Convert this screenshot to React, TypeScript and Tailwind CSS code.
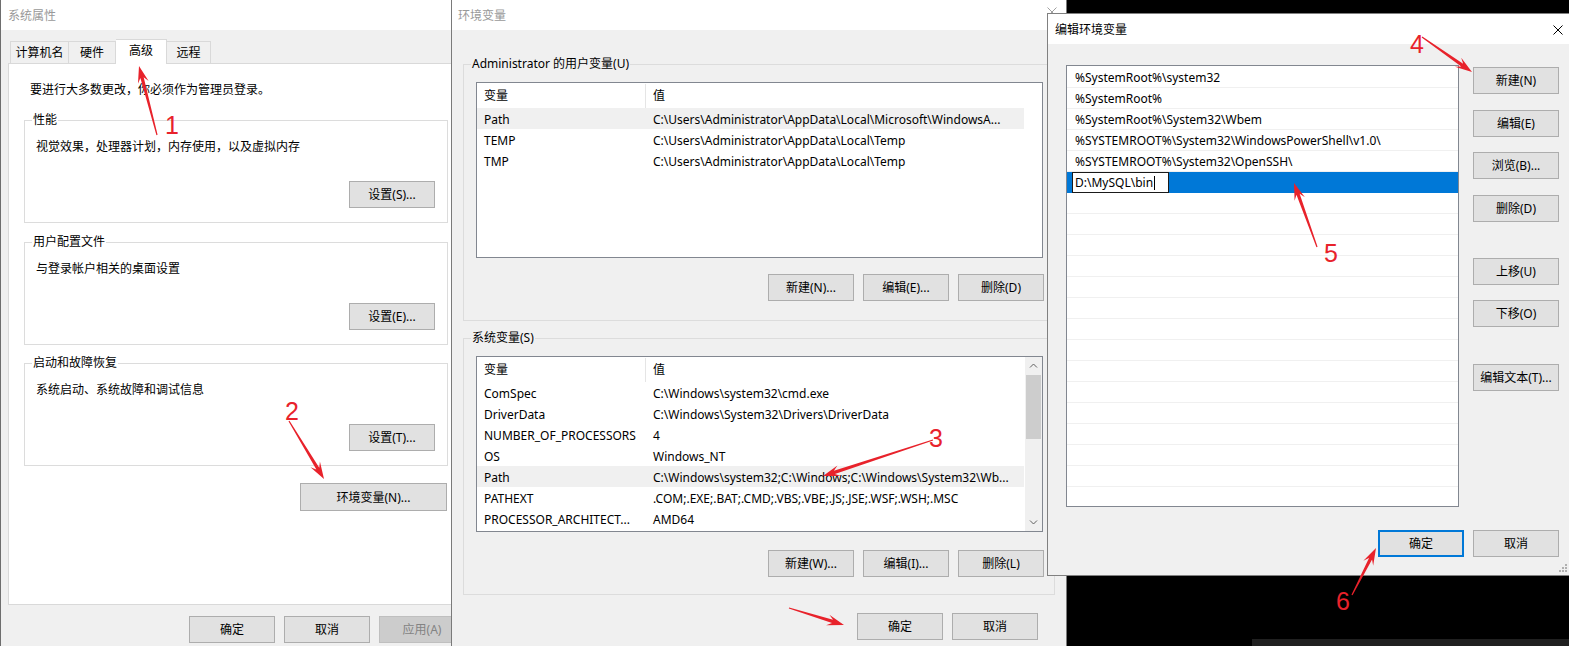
import React from "react";

const userVars = [
  ["Path", "C:\\Users\\Administrator\\AppData\\Local\\Microsoft\\WindowsA..."],
  ["TEMP", "C:\\Users\\Administrator\\AppData\\Local\\Temp"],
  ["TMP", "C:\\Users\\Administrator\\AppData\\Local\\Temp"],
];

const sysVars = [
  ["ComSpec", "C:\\Windows\\system32\\cmd.exe"],
  ["DriverData", "C:\\Windows\\System32\\Drivers\\DriverData"],
  ["NUMBER_OF_PROCESSORS", "4"],
  ["OS", "Windows_NT"],
  ["Path", "C:\\Windows\\system32;C:\\Windows;C:\\Windows\\System32\\Wb..."],
  ["PATHEXT", ".COM;.EXE;.BAT;.CMD;.VBS;.VBE;.JS;.JSE;.WSF;.WSH;.MSC"],
  ["PROCESSOR_ARCHITECT...", "AMD64"],
];

const pathItems = [
  "%SystemRoot%\\system32",
  "%SystemRoot%",
  "%SystemRoot%\\System32\\Wbem",
  "%SYSTEMROOT%\\System32\\WindowsPowerShell\\v1.0\\",
  "%SYSTEMROOT%\\System32\\OpenSSH\\",
];

// tail x, tail y, tip x, tip y
const arrows = [
  [157, 135, 139, 66],
  [289, 421, 324, 479],
  [933, 440, 823, 476],
  [1422, 37, 1472, 72],
  [1317, 247, 1294, 183],
  [1352, 595, 1376, 548],
  [789, 608, 844, 625],
];

const marks = [
  ["1", 165, 134],
  ["2", 285, 420],
  ["3", 929, 447],
  ["4", 1410, 53],
  ["5", 1324, 262],
  ["6", 1336, 610],
];

function arrowPoints([x1, y1, x2, y2]: number[]) {
  const len = Math.hypot(x2 - x1, y2 - y1);
  const ux = (x2 - x1) / len;
  const uy = (y2 - y1) / len;
  const nx = -uy;
  const ny = ux;
  const bx = x2 - ux * 12;
  const by = y2 - uy * 12;
  const wx = x2 - ux * 17;
  const wy = y2 - uy * 17;
  const pts = [
    [x1 + nx * 0.6, y1 + ny * 0.6],
    [bx + nx * 1.7, by + ny * 1.7],
    [wx + nx * 5.5, wy + ny * 5.5],
    [x2, y2],
    [wx - nx * 5.5, wy - ny * 5.5],
    [bx - nx * 1.7, by - ny * 1.7],
    [x1 - nx * 0.6, y1 - ny * 0.6],
  ];
  return pts.map((p) => p.join(",")).join(" ");
}

function Btn({
  children,
  className = "",
}: {
  children: React.ReactNode;
  className?: string;
}) {
  return (
    <div
      className={`flex h-[27px] w-[86px] shrink-0 items-center justify-center border border-[#adadad] bg-[#e1e1e1] pt-px text-black ${className}`}
    >
      {children}
    </div>
  );
}

function CloseX({ className = "" }: { className?: string }) {
  return (
    <svg width="10" height="10" viewBox="0 0 10 10" className={className}>
      <path d="M0.5 0.5L9.5 9.5M9.5 0.5L0.5 9.5" stroke="currentColor" strokeWidth="1" />
    </svg>
  );
}

function GroupBox({
  label,
  text,
  button,
  className = "",
}: {
  label: string;
  text: string;
  button: string;
  className?: string;
}) {
  return (
    <div className={`relative ml-[15px] h-[103px] w-[424px] border border-[#dcdcdc] ${className}`}>
      <span className="absolute -top-[9px] left-[7px] bg-white px-[1px] leading-[16px]">{label}</span>
      <p className="pl-[11px] pt-[18px] leading-[16px]">{text}</p>
      <div className="mt-[26px] flex justify-end pr-[12px]">
        <Btn>{button}</Btn>
      </div>
    </div>
  );
}

function SystemProperties() {
  return (
    <div className="absolute left-0 top-0 h-[646px] w-[471px] border-l border-[#6e6e6e] bg-[#f0f0f0]">
      <div className="flex h-[30px] items-center bg-white pl-[7px] pt-px text-[#999]">系统属性</div>
      <div className="ml-[9px] mt-[9px] flex h-[24px] items-end">
        <div className="flex h-[22px] w-[59px] items-center justify-center border border-b-0 border-[#d9d9d9]">计算机名</div>
        <div className="flex h-[22px] w-[47px] items-center justify-center border border-b-0 border-l-0 border-[#d9d9d9]">硬件</div>
        <div className="relative z-10 -mb-px flex h-[25px] w-[51px] items-center justify-center border border-b-0 border-l-0 border-[#d9d9d9] bg-white pb-[2px]">高级</div>
        <div className="flex h-[22px] w-[44px] items-center justify-center border border-b-0 border-l-0 border-[#d9d9d9]">远程</div>
      </div>
      <div className="ml-[7px] h-[542px] w-[456px] border border-[#d9d9d9] bg-white">
        <p className="ml-[21px] mt-[18px] leading-[16px]">要进行大多数更改，你必须作为管理员登录。</p>
        <GroupBox className="mt-[22px]" label="性能" text="视觉效果，处理器计划，内存使用，以及虚拟内存" button="设置(S)..." />
        <GroupBox className="mt-[19px]" label="用户配置文件" text="与登录帐户相关的桌面设置" button="设置(E)..." />
        <GroupBox className="mt-[18px]" label="启动和故障恢复" text="系统启动、系统故障和调试信息" button="设置(T)..." />
        <div className="mt-[17px] flex justify-end pr-[16px]">
          <Btn className="!h-[28px] !w-[147px]">环境变量(N)...</Btn>
        </div>
      </div>
      <div className="mt-[11px] flex gap-[9px] pl-[188px]">
        <Btn>确定</Btn>
        <Btn>取消</Btn>
        <Btn className="!border-[#bfbfbf] !bg-[#cccccc] !text-[#838383]">应用(A)</Btn>
      </div>
    </div>
  );
}

function VarList({ rows, highlight, scroll }: { rows: string[][]; highlight: number; scroll?: boolean }) {
  return (
    <div className="ml-[12px] flex h-[176px] w-[567px] border border-[#828790] bg-white">
      <div className="w-[547px] overflow-hidden">
        <div className="flex h-[25px] items-center pt-px">
          <div className="flex h-full w-[169px] items-center border-r border-[#e5e5e5] pl-[7px]">变量</div>
          <div className="pl-[7px]">值</div>
        </div>
        {rows.map(([name, value], i) => (
          <div
            key={name + i}
            className={`flex h-[21px] items-center whitespace-nowrap pt-[2px] ${i === highlight ? "bg-[#f0f0f0]" : ""}`}
          >
            <div className="w-[169px] overflow-hidden pl-[7px]">{name}</div>
            <div className="pl-[7px]">{value}</div>
          </div>
        ))}
      </div>
      {scroll && (
        <div className="ml-auto flex w-[17px] flex-col items-center bg-[#f0f0f0]">
          <svg width="9" height="17" viewBox="0 0 9 17" className="text-[#606060]">
            <path d="M1 10.5L4.5 7L8 10.5" fill="none" stroke="currentColor" strokeWidth="1" />
          </svg>
          <div className="mt-[1px] h-[64px] w-[15px] bg-[#cdcdcd]" />
          <div className="flex-1" />
          <svg width="9" height="17" viewBox="0 0 9 17" className="text-[#606060]">
            <path d="M1 6.5L4.5 10L8 6.5" fill="none" stroke="currentColor" strokeWidth="1" />
          </svg>
        </div>
      )}
    </div>
  );
}

function EnvironmentVariables() {
  return (
    <div className="absolute left-[451px] top-0 h-[646px] w-[616px] border-x border-[#7a7a7a] bg-[#f0f0f0]">
      <div className="flex h-[30px] items-center justify-between bg-white pl-[6px] pr-[9px] pt-px text-[#999]">
        <span>环境变量</span>
        <CloseX className="mb-[8px] text-[#a0a0a0]" />
      </div>
      <div className="relative ml-[11px] mt-[34px] h-[257px] w-[592px] border border-[#dcdcdc]">
        <span className="absolute -top-[9px] left-[7px] bg-[#f0f0f0] px-[1px] leading-[16px]">
          Administrator 的用户变量(U)
        </span>
        <div className="mt-[17px]">
          <VarList rows={userVars} highlight={0} />
        </div>
        <div className="mt-[16px] flex justify-end gap-[9px] pr-[10px]">
          <Btn>新建(N)...</Btn>
          <Btn>编辑(E)...</Btn>
          <Btn>删除(D)</Btn>
        </div>
      </div>
      <div className="relative ml-[11px] mt-[17px] h-[257px] w-[592px] border border-[#dcdcdc]">
        <span className="absolute -top-[9px] left-[7px] bg-[#f0f0f0] px-[1px] leading-[16px]">系统变量(S)</span>
        <div className="mt-[17px]">
          <VarList rows={sysVars} highlight={4} scroll />
        </div>
        <div className="mt-[18px] flex justify-end gap-[9px] pr-[10px]">
          <Btn>新建(W)...</Btn>
          <Btn>编辑(I)...</Btn>
          <Btn>删除(L)</Btn>
        </div>
      </div>
      <div className="mt-[18px] flex justify-end gap-[9px] pr-[28px]">
        <Btn>确定</Btn>
        <Btn>取消</Btn>
      </div>
    </div>
  );
}

function EditEnvironmentVariable() {
  const empty = Array.from({ length: 15 }, (_, i) => i);
  return (
    <div className="absolute left-[1047px] top-[13px] h-[563px] w-[522px] border border-r-0 border-[#808080] bg-[#f0f0f0]">
      <div className="flex h-[30px] items-center justify-between bg-white pl-[7px] pr-[6px] pt-px text-black">
        <span>编辑环境变量</span>
        <CloseX className="text-black" />
      </div>
      <div className="flex">
        <div className="ml-[18px] mt-[21px] h-[442px] w-[393px] overflow-hidden border border-[#828790] bg-white pt-[1px]">
          {pathItems.map((item) => (
            <div key={item} className="flex h-[21px] items-center whitespace-nowrap border-b border-[#f0f0f0] pl-[8px] pt-px">
              {item}
            </div>
          ))}
          <div className="flex h-[21px] items-center bg-[#0078d7] pl-[5px]">
            <div className="flex h-[21px] w-[97px] items-center border border-[#1a1a1a] bg-white pl-[2px] pt-px">
              D:\MySQL\bin
              <span className="ml-[1px] h-[14px] w-px bg-black" />
            </div>
          </div>
          {empty.map((i) => (
            <div key={i} className="h-[21px] border-b border-[#f0f0f0]" />
          ))}
        </div>
        <div className="ml-[14px] mt-[23px] flex flex-col">
          <Btn>新建(N)</Btn>
          <Btn className="mt-[16px]">编辑(E)</Btn>
          <Btn className="mt-[15px]">浏览(B)...</Btn>
          <Btn className="mt-[16px]">删除(D)</Btn>
          <Btn className="mt-[36px]">上移(U)</Btn>
          <Btn className="mt-[15px]">下移(O)</Btn>
          <Btn className="mt-[37px]">编辑文本(T)...</Btn>
        </div>
      </div>
      <div className="mt-[23px] flex justify-end gap-[9px] pr-[10px]">
        <Btn className="!border-2 !border-[#0078d7]">确定</Btn>
        <Btn>取消</Btn>
      </div>
      <svg width="10" height="10" viewBox="0 0 10 10" className="absolute bottom-[2px] right-[1px] text-[#b0b0b0]">
        <rect x="7" y="1" width="2" height="2" fill="currentColor" />
        <rect x="4" y="4" width="2" height="2" fill="currentColor" />
        <rect x="7" y="4" width="2" height="2" fill="currentColor" />
        <rect x="1" y="7" width="2" height="2" fill="currentColor" />
        <rect x="4" y="7" width="2" height="2" fill="currentColor" />
        <rect x="7" y="7" width="2" height="2" fill="currentColor" />
      </svg>
    </div>
  );
}

export default function App() {
  return (
    <div className="relative h-[646px] w-[1569px] overflow-hidden bg-black font-['Noto_Sans','Noto_Sans_CJK_SC',sans-serif] text-[12px] text-black">
      <div className="absolute bottom-0 left-[1252px] right-0 h-[7px] bg-[#202020]" />
      <SystemProperties />
      <EnvironmentVariables />
      <EditEnvironmentVariable />
      <svg
        width="1569"
        height="646"
        viewBox="0 0 1569 646"
        className="pointer-events-none absolute left-0 top-0"
      >
        {arrows.map((a, i) => (
          <polygon key={i} points={arrowPoints(a)} fill="#e8222b" />
        ))}
        {marks.map(([t, x, y]) => (
          <text key={t} x={x} y={y} fill="#e8222b" fontSize="25" fontFamily="Liberation Sans, sans-serif">
            {t}
          </text>
        ))}
      </svg>
    </div>
  );
}
